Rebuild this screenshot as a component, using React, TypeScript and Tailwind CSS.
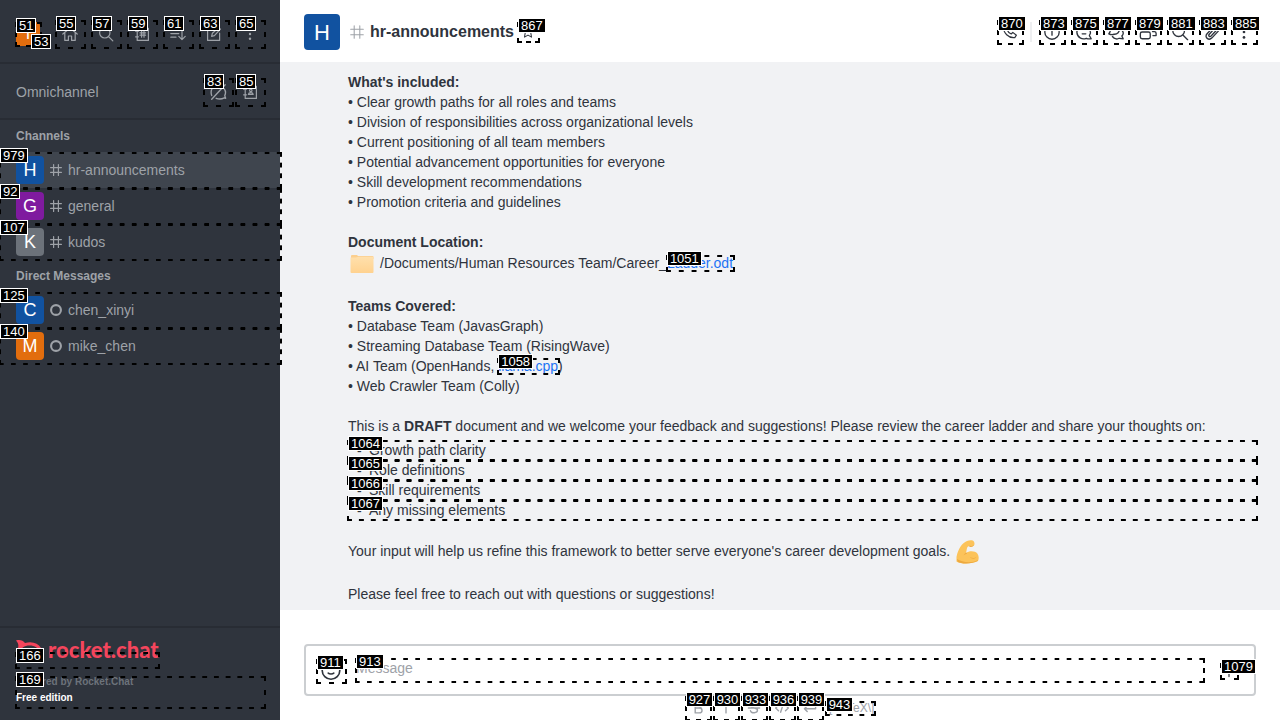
import type { ReactNode } from 'react'

const INK = 'text-[#2f343d]'

/* Dashed frame round the parent, with its numbered label */
function Tag({ n }: { n: number }) {
  return (
    <span aria-hidden="true" className="pointer-events-none absolute -left-px -right-0.5 top-0 -bottom-px z-20">
      <span className="absolute inset-0 pr-[5px] pb-[5px] bg-origin-content bg-clip-border [background-image:linear-gradient(90deg,#000_5px,transparent_5px),linear-gradient(90deg,#000_5px,transparent_5px),linear-gradient(180deg,#000_5px,transparent_5px),linear-gradient(180deg,#000_5px,transparent_5px)] [background-size:12px_2px,12px_2px,2px_12px,2px_12px] [background-repeat:round_no-repeat,round_no-repeat,no-repeat_round,no-repeat_round] [background-position:0_0,0_calc(100%_+_5px),0_0,calc(100%_+_5px)_0]" />
      <Label n={n} />
    </span>
  )
}

function Label({ n }: { n: number }) {
  return (
    <span className="absolute -top-1 left-px border border-white bg-black px-0.5 font-['Liberation_Sans',sans-serif] text-[13px] leading-[13px] font-normal text-white">
      {n}
    </span>
  )
}

function Icon({ children, size = 20, width = 1.5 }: { children: ReactNode; size?: number; width?: number }) {
  return (
    <svg width={size} height={size} viewBox="0 0 20 20" fill="none" stroke="currentColor" strokeWidth={width} strokeLinecap="round" strokeLinejoin="round" aria-hidden="true">
      {children}
    </svg>
  )
}

const dots = (
  <g fill="currentColor" stroke="none">
    <circle cx="10" cy="4" r="1.5" />
    <circle cx="10" cy="10" r="1.5" />
    <circle cx="10" cy="16" r="1.5" />
  </g>
)
const magnifier = <><circle cx="8.5" cy="8.5" r="6.500" /><path d="M13.500 13.500l5 5" /></>
const hash = <path d="M6 1v18M14 1v18M1 6h18M1 14h18" />

const sideTools = [
  { n: 55, name: 'Home', art: <path d="M1 10l9-7.500 9 7.500M3.500 9v9h4.500v-5.500h4V18h4.500V9" /> },
  { n: 57, name: 'Search', art: magnifier },
  { n: 59, name: 'Directory', art: <path d="M4 3h14v15H4zM2 6.500h3.500M2 13.500h3.500M9.500 6v8M12.500 6v8M7.500 8.500h7M7.500 11.500h7" /> },
  { n: 61, name: 'Display', art: <path d="M1 5h10M1 9.500h10M1 14h6.500M15 4v13M11 13l4 4 4-4" /> },
  { n: 63, name: 'Create new', art: <path d="M11 3H2v15h15V9M7 13l1-4 8-7 2 2-7.500 8z" /> },
  { n: 65, name: 'Administration', art: dots },
]

const roomTools = [
  { n: 873, name: 'Room information', art: <><circle cx="10" cy="10" r="8" /><path d="M10 6v.2M10 9v4.500" /></> },
  { n: 875, name: 'Threads', art: <path d="M18 17.500l-2-3.500a7.500 7.500 0 1 0-3.500 3c1.500.7 3.500.9 5.500.5zM6.500 8h7M8 12h4" /> },
  { n: 877, name: 'Discussion', art: <path d="M2 12l1.500-2.500A5.500 5.500 0 1 1 8 12.500c-2.500.8-4 .5-6-.5zM6 15c2.500 3.500 6 3 7.500 2l4.500.5-1.500-3c2-2 2-4.500.500-6" /> },
  { n: 879, name: 'Teams', art: <><rect x="1.500" y="10" width="11" height="7.500" rx="2" /><path d="M15 9.500h2q2 0 2 2V14h-3.500M4 7V3h5v4M12 6V3h4v3" /></> },
  { n: 881, name: 'Search messages', art: magnifier },
  { n: 883, name: 'Files', art: <path d="M17 9l-7 7.500c-3.500 3.500-9-.5-5.500-4.500l7.500-8c2.500-2.500 6 .8 4 3l-7 7.500c-1.500 1.500-3.500-.2-2-2L13 6" /> },
  { n: 885, name: 'Options', art: dots },
]

type Room = { n: number; name: string; initial: string; color: string; direct?: boolean; active?: boolean }
const channels: Room[] = [
  { n: 979, name: 'hr-announcements', initial: 'H', color: 'bg-[#1152a0]', active: true },
  { n: 92, name: 'general', initial: 'G', color: 'bg-[#7f1b9f]' },
  { n: 107, name: 'kudos', initial: 'K', color: 'bg-[#6c727a]' },
]
const directs: Room[] = [
  { n: 125, name: 'chen_xinyi', initial: 'C', color: 'bg-[#1152a0]', direct: true },
  { n: 140, name: 'mike_chen', initial: 'M', color: 'bg-[#e26d0e]', direct: true },
]

function RoomList({ title, rooms }: { title: string; rooms: Room[] }) {
  return (
    <section>
      <h2 className="px-4 py-2 text-xs font-bold">{title}</h2>
      {rooms.map((r) => (
        <a key={r.n} href={'#' + r.name} className={`relative flex h-9 items-center px-4 text-sm ${r.active ? 'bg-[#3f454e]' : ''}`}>
          <span className={`flex size-7 items-center justify-center rounded text-lg text-white ${r.color}`}>{r.initial}</span>
          <span className="mx-1.5">
            {r.direct ? <Icon size={12} width={3.5}><circle cx="10" cy="10" r="8.200" /></Icon> : <Icon size={12} width={2}>{hash}</Icon>}
          </span>
          {r.name}
          <Tag n={r.n} />
        </a>
      ))}
    </section>
  )
}

function Sidebar() {
  return (
    <aside className="relative z-10 flex w-[280px] shrink-0 flex-col bg-[#2f343d] text-[#9ea2a8]">
      <div className="flex h-16 items-center gap-2 border-b-2 border-[#282c34] px-4 pt-1.5">
        <button aria-label="User menu" className="relative mr-2 flex size-6 items-center justify-center rounded bg-[#e26d0e] text-base text-white">
          I
          <Tag n={51} />
          <span aria-hidden="true" className="absolute top-4 left-3.5 z-20"><Label n={53} /></span>
        </button>
        {sideTools.map((t) => (
          <button key={t.n} aria-label={t.name} className="relative flex size-7 items-center justify-center">
            <Icon size={16}>{t.art}</Icon>
            <Tag n={t.n} />
          </button>
        ))}
      </div>
      <div className="flex h-14 items-center gap-1 border-b-2 border-[#282c34] px-4 pt-0.5 text-sm">
        <span className="flex-1">Omnichannel</span>
        <button aria-label="Turn on answering" className="relative flex size-7 items-center justify-center">
          <Icon size={18}><path d="M18 2L3 18M3 14C1 8 4 3 9 2.500M8 17c4 1.500 7 .5 9-.5l1.500.5-1-3c1.500-3 .5-6-.5-7.500" /></Icon>
          <Tag n={83} />
        </button>
        <button aria-label="Contact center" className="relative flex size-7 items-center justify-center">
          <Icon size={16}><path d="M4 3h14v15H4zM2 6.500h3.500M2 13.500h3.500M8 13c.5-3 5.500-3 6 0z" /><circle cx="11" cy="8" r="1.500" /></Icon>
          <Tag n={85} />
        </button>
      </div>
      <nav className="flex-1">
        <RoomList title="Channels" rooms={channels} />
        <RoomList title="Direct Messages" rooms={directs} />
      </nav>
      <footer className="border-t-2 border-[#282c34] px-4 pt-2.5 pb-3">
        <a href="#home" className="flex h-7 items-start gap-1.5 text-[#f5455c]">
          <svg className="mt-0.5" width="26" height="24" viewBox="0 0 26 24" fill="none" aria-hidden="true">
            <path d="M0 0.500C4-.5 7 .500 9 3c7-2 13 0 16 5 2 4 0 9-6 11-4 1.500-7 1.500-10 .5-2 2.500-5 4-9 3 2-2 3-4 2-6.500-2-3-2-5.500 0-8C3 5 2 2.500 0 .5z" fill="currentColor" />
            <path d="M4.500 12c0-4 4-6.500 9-6.500S23 8 23 12s-4 5.500-9.500 5.500c-2 0-3 0-5-1l-2 2c0-2-2-3-2-6.500z" fill="#2f343d" />
            <g fill="currentColor"><circle cx="9.500" cy="12" r="1.300" /><circle cx="14" cy="12" r="1.300" /><circle cx="18.500" cy="12" r="1.300" /></g>
          </svg>
          <span className="font-['Lato',sans-serif] text-[22px] leading-6 font-black">rocket.chat</span>
        </a>
        <div className="relative -mt-3.5 mr-[106px] h-4"><Tag n={166} /></div>
        <div className="relative mt-2 flex h-8 flex-col text-[10px] leading-4 font-bold">
          <p className="-mt-0.5 text-[#6c727a]">Powered by Rocket.Chat</p>
          <p className="text-white">Free edition</p>
          <Tag n={169} />
        </div>
      </footer>
    </aside>
  )
}

function Message() {
  return (
    <article className={`min-h-0 flex-1 overflow-hidden bg-[#f1f2f4] pt-2.5 pr-6 pl-[68px] text-sm leading-5 ${INK}`}>
      <p className="font-bold">What's included:</p>
      <p>• Clear growth paths for all roles and teams</p>
      <p>• Division of responsibilities across organizational levels</p>
      <p>• Current positioning of all team members</p>
      <p>• Potential advancement opportunities for everyone</p>
      <p>• Skill development recommendations</p>
      <p>• Promotion criteria and guidelines</p>
      <p className="mt-5 font-bold">Document Location:</p>
      <div className="flex h-6 items-start">
        <svg className="mr-1 shrink-0" width="28" height="24" viewBox="0 0 28 24" role="img" aria-label="folder">
          <defs>
            <linearGradient id="folder" x1="0" y1="0" x2="0" y2="1">
              <stop offset="0" stopColor="#ffe0ac" />
              <stop offset="1" stopColor="#ffd28f" />
            </linearGradient>
          </defs>
          <path d="M3 4q0-1 1-1h5l1 1h14.500q1 0 1 1v2H3z" fill="#fbcf8e" />
          <path d="M2.500 5.500q7 .3 8-.7h15V20q0 1-1 1h-21q-1 0-1-1z" fill="url(#folder)" />
        </svg>
        <p className="pt-px">/Documents/Human Resources Team/Career_<a href="#ladder" className="relative text-[#1d74f5]">Ladder.odt<Tag n={1051} /></a></p>
      </div>
      <p className="mt-5 font-bold">Teams Covered:</p>
      <p>• Database Team (JavasGraph)</p>
      <p>• Streaming Database Team (RisingWave)</p>
      <p>• AI Team (OpenHands, <a href="#llama" className="relative text-[#1d74f5]">llama.cpp<Tag n={1058} /></a>)</p>
      <p>• Web Crawler Team (Colly)</p>
      <p className="mt-5">This is a <strong>DRAFT</strong> document and we welcome your feedback and suggestions! Please review the career ladder and share your thoughts on:</p>
      <ul className="mt-1">
        <li className="relative flex h-5"><span className="w-[21px] pt-px pl-[9px]">-</span>Growth path clarity<Tag n={1064} /></li>
        <li className="relative flex h-5"><span className="w-[21px] pt-px pl-[9px]">-</span>Role definitions<Tag n={1065} /></li>
        <li className="relative flex h-5"><span className="w-[21px] pt-px pl-[9px]">-</span>Skill requirements<Tag n={1066} /></li>
        <li className="relative flex h-5"><span className="w-[21px] pt-px pl-[9px]">-</span>Any missing elements<Tag n={1067} /></li>
      </ul>
      <div className="mt-5 flex h-6 items-start">
        <p className="pt-px">Your input will help us refine this framework to better serve everyone's career development goals.</p>
        <svg className="ml-1.5 shrink-0" width="24" height="24" viewBox="0 0 24 24" role="img" aria-label="muscle">
          <path d="M.5 17C2 9 6 3 11 1c3-1 6-1 7 .8 1 2 .5 4-1.500 4.600-1.500.2-3-.6-4.500.2-1.500 1-1 3.500-2 6.500 3-2.500 9-2.500 11.500.6 1.500 2.500 1.500 5 .5 7.300-5 3-17 3.500-21.500.5z" fill="#fcc35a" />
          <path d="M1 19c5 3.500 15 4.500 21 1l-.5 1c-5 3-16 3.500-20 .5zM10.500 12.500c-1 .5-2 1-3 3 1-1 2-1.500 3.500-1.500zM14 5.500c1 .8 2.500.8 4-.5-.5 1.500-3 2.500-5 1.500zM14 17c2 1.500 5 1.500 6.500-.5-1 3-5.500 2.500-6.500.5z" fill="#eda93f" />
        </svg>
      </div>
      <p className="mt-5">Please feel free to reach out with questions or suggestions!</p>
    </article>
  )
}

const formats = [
  { n: 927, name: 'Bold', art: <path d="M6 4h5c5 0 5 6 0 6H6zM6 10h6c5 0 5 7 0 7H6z" /> },
  { n: 930, name: 'Italic', art: <path d="M10 4v13" /> },
  { n: 933, name: 'Strike', art: <path d="M14 6c-1-3-8-3-8 1 0 4 9 2 9 6 0 5-9 5-10 1M2 10h16" /> },
  { n: 936, name: 'Inline code', art: <path d="M5 6l-4 4 4 4M15 6l4 4-4 4M12 4L8 16" /> },
  { n: 939, name: 'Multi-line code', art: <path d="M18 5v6H2M6 7l-4 4 4 4" /> },
]

function Composer() {
  return (
    <footer className="h-[110px] shrink-0 px-6 pt-[34px]">
      <div className="flex h-[52px] items-start rounded border-2 border-[#cbced1] pt-3 pr-[17px] pl-[11px]">
        <button aria-label="Emoji" className={`relative mt-px flex h-6 w-7 items-center justify-center ${INK}`}>
          <Icon size={22}><circle cx="10" cy="9.500" r="8" /><path d="M7.500 12c1 1 4 1 5 0M7 8v.2M13 8v.2" /></Icon>
          <Tag n={911} />
        </button>
        <div className="relative mr-[18px] ml-[11px] h-6 flex-1">
          <textarea aria-label="Message" placeholder="Message" rows={1} className="block h-6 w-full resize-none overflow-hidden text-sm leading-5 outline-none placeholder:text-[#9ea2a8]" />
          <Tag n={913} />
        </div>
        <button aria-label="Add" className={`relative mt-[5px] flex size-4 items-center justify-center ${INK}`}>
          <Icon size={16}><path d="M10 3v14M3 10h14" /></Icon>
          <Tag n={1079} />
        </button>
      </div>
      <div className="flex h-6 items-start justify-center gap-1 text-[#9ea2a8]">
        {formats.map((f) => (
          <button key={f.n} aria-label={f.name} className="relative flex size-6 shrink-0 items-center justify-center">
            <Icon size={14} width={2}>{f.art}</Icon>
            <Tag n={f.n} />
          </button>
        ))}
        <a href="#katex" className="relative mt-[5px] text-xs leading-[14px]">\[KaTeX\]<Tag n={943} /></a>
      </div>
    </footer>
  )
}

export default function App() {
  return (
    <div className="flex h-screen overflow-hidden bg-white font-['Liberation_Sans',Arial,sans-serif]">
      <Sidebar />
      <main className="flex min-w-0 flex-1 flex-col">
        <header className={`flex h-[62px] shrink-0 items-center px-6 pt-0.5 ${INK}`}>
          <span className="flex size-9 items-center justify-center rounded bg-[#1152a0] text-[22px] text-white">H</span>
          <span className="mr-1.5 ml-2.5 text-[#9ea2a8]"><Icon size={14}>{hash}</Icon></span>
          <h1 className="text-base font-bold">hr-announcements</h1>
          <button aria-label="Favorite" className="relative ml-1 flex size-5 items-center justify-center">
            <Icon size={14}><path d="M10 1l2.500 5.500 6 .8-4.500 4 1 6-5-2.800-5 2.800 1-6-4.500-4 6-.8z" /></Icon>
            <Tag n={867} />
          </button>
          <div className="ml-auto flex items-center gap-2">
            <button aria-label="Call" className="relative flex size-6 items-center justify-center">
              <Icon size={16}><path d="M2 3l3.500-2 3 4.500-2 2c1 2.500 2.500 4 5 5l2-2 4.500 3.500-2 3C8.500 18 1 11 2 3z" /></Icon>
              <Tag n={870} />
            </button>
            <span className="h-5 w-0.5 bg-[#eeeff1]" />
            {roomTools.map((t) => (
              <button key={t.n} aria-label={t.name} className="relative flex size-6 items-center justify-center">
                <Icon size={18}>{t.art}</Icon>
                <Tag n={t.n} />
              </button>
            ))}
          </div>
        </header>
        <Message />
        <Composer />
      </main>
    </div>
  )
}
